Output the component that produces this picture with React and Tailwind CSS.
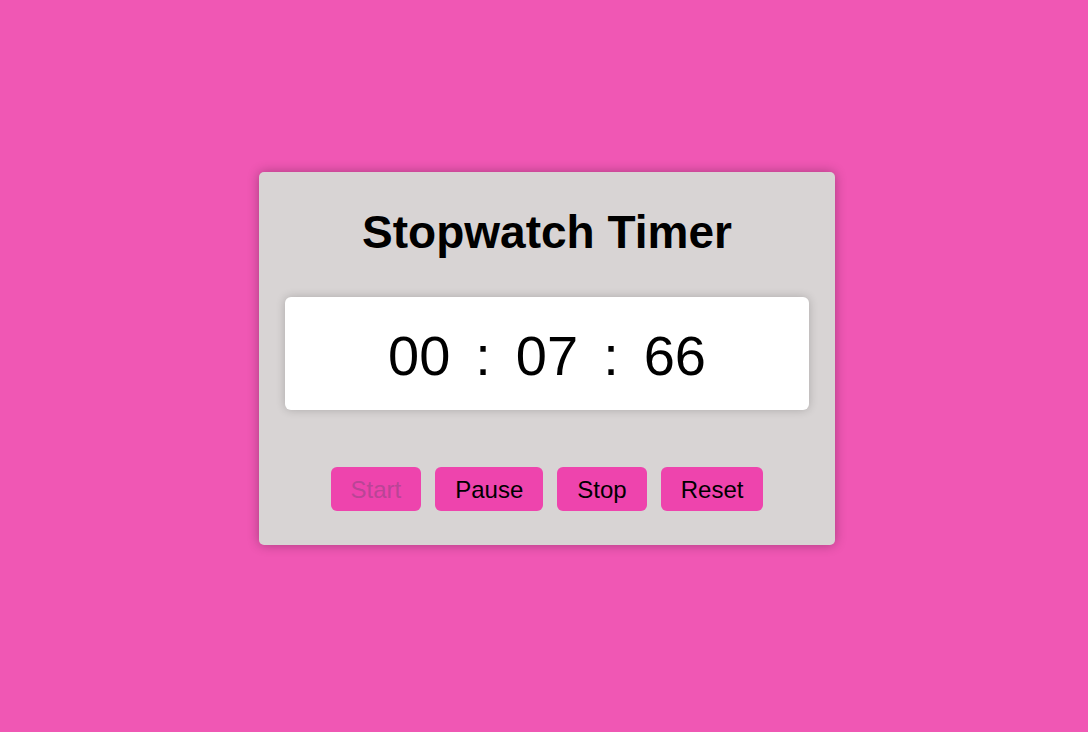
// App.jsx
import { useState } from "react";

const buttons = [
  { label: "Start", disabled: true },
  { label: "Pause" },
  { label: "Stop" },
  { label: "Reset" },
];

const App = () => {
  const [time] = useState({ min: "00", sec: "07", ms: "66" });

  return (
    <div
      className="min-h-screen w-full bg-[#f057b4] flex items-center justify-center pl-[6px] pb-[15px]"
      style={{ fontFamily: '"Liberation Sans", Arial, sans-serif' }}
    >
      <div className="w-[576px] bg-[#d8d4d4] rounded-[5px] shadow-[0_0_12px_rgba(0,0,0,0.3)] px-[26px] pt-[34px] pb-[34px]">
        <h1 className="text-[46px] font-bold text-black text-center leading-[1.15]">
          Stopwatch Timer
        </h1>

        <div className="mt-[38px] bg-white rounded-[6px] shadow-[0_0_10px_rgba(0,0,0,0.2)] pt-[27px] pb-[21px] flex justify-center gap-[25px] text-[56px] leading-[1.15] text-black">
          <span>{time.min}</span>
          <span>:</span>
          <span>{time.sec}</span>
          <span>:</span>
          <span>{time.ms}</span>
        </div>

        <div className="mt-[57px] flex justify-center gap-[14px]">
          {buttons.map((b) => (
            <button
              key={b.label}
              disabled={b.disabled}
              className={
                "bg-[#ee44ad] rounded-[6px] px-[20px] h-[44px] pt-[2px] text-[24px] leading-none " +
                (b.disabled ? "text-[#b94596]" : "text-black")
              }
            >
              {b.label}
            </button>
          ))}
        </div>
      </div>
    </div>
  );
};

export default App;
